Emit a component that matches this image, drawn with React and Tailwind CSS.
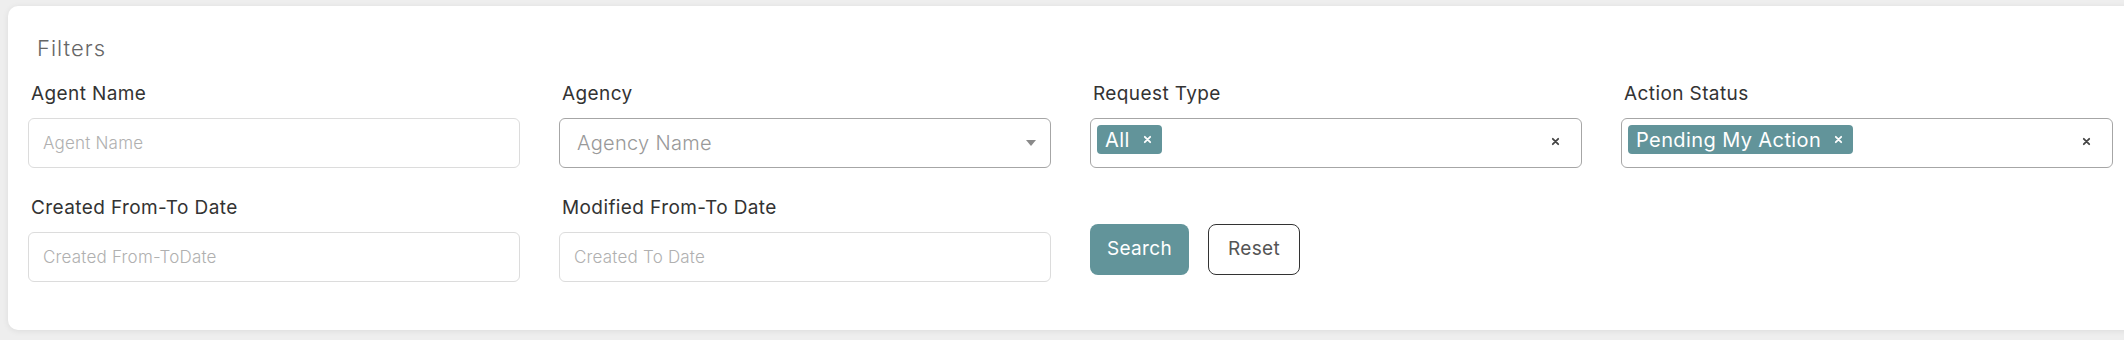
// Small bold "x" used for chips and the clear button
function CrossIcon(props) {
  return (
    <svg width={props.size} height={props.size} viewBox="0 0 10 10" className={props.className}>
      <path d="M2 2L8 8M8 2L2 8" stroke="currentColor" strokeWidth="2" strokeLinecap="round" />
    </svg>
  );
}

function Label(props) {
  return (
    <label className="block pl-[3px] text-[19px] leading-[22px] tracking-[0.4px] text-[#333333] mb-[13px]">
      {props.children}
    </label>
  );
}

function TextInput(props) {
  return (
    <input
      type="text"
      placeholder={props.placeholder}
      className="w-full h-[50px] px-[14px] rounded-[6px] border border-[#dcdcdc] bg-white text-[17px] font-light tracking-[0.2px] text-[#333] placeholder:text-[#b0b0b0] outline-none"
    />
  );
}

function Chip(props) {
  return (
    <span className="flex items-center h-[29px] pl-[8px] pr-[10px] rounded-[4px] bg-[#62949a] text-white text-[20px] tracking-[0.4px] leading-none">
      <span>{props.text}</span>
      <CrossIcon size={9} className="ml-[13px] text-white" />
    </span>
  );
}

function MultiSelect(props) {
  return (
    <div className="w-full h-[50px] flex items-center justify-between pl-[6px] pr-[21px] rounded-[6px] border border-[#a6a6a6] bg-white">
      <div className="flex items-center gap-2 -mt-[7px]">
        <Chip text={props.value} />
      </div>
      <CrossIcon size={9} className="text-[#444] -mt-[4px]" />
    </div>
  );
}

export default function App() {
  return (
    <div className="w-[2124px] h-[340px] overflow-hidden bg-[#eeeeee] pt-[6px] pl-[8px]" style={{ fontFamily: "Inter, 'Noto Sans', sans-serif" }}>
      <div className="w-[2150px] h-[324px] bg-white rounded-[10px] shadow-[0_1px_6px_rgba(0,0,0,0.08)] pl-[20px] pt-[29px]">
        <h2 className="pl-[9px] text-[22px] leading-[26px] tracking-[1px] text-[#666666] font-light mb-[22px]">
          Filters
        </h2>

        <div className="grid grid-cols-[492px_492px_492px_492px] gap-x-[39px]">
          <div>
            <Label>Agent Name</Label>
            <TextInput placeholder="Agent Name" />
          </div>
          <div>
            <Label>Agency</Label>
            <div className="w-full h-[50px] flex items-center justify-between pl-[17px] pr-[14px] rounded-[6px] border border-[#a6a6a6] bg-white">
              <span className="text-[20px] font-light tracking-[0.3px] text-[#999999]">Agency Name</span>
              <svg width="10" height="6" viewBox="0 0 10 6">
                <path d="M0 0H10L5 6Z" fill="#8a8a8a" />
              </svg>
            </div>
          </div>
          <div>
            <Label>Request Type</Label>
            <MultiSelect value="All" />
          </div>
          <div>
            <Label>Action Status</Label>
            <MultiSelect value="Pending My Action" />
          </div>
        </div>

        <div className="grid grid-cols-[492px_492px_492px_492px] gap-x-[39px] mt-[29px]">
          <div>
            <Label>Created From-To Date</Label>
            <TextInput placeholder="Created From-ToDate" />
          </div>
          <div>
            <Label>Modified From-To Date</Label>
            <TextInput placeholder="Created To Date" />
          </div>
          <div className="flex items-start gap-[19px] pt-[27px]">
            <button className="w-[99px] h-[51px] rounded-[8px] bg-[#62949a] text-white text-[19px] tracking-[0.3px]">
              Search
            </button>
            <button className="w-[92px] h-[51px] rounded-[8px] bg-white border border-[#333] text-[#555] text-[19px] tracking-[0.3px]">
              Reset
            </button>
          </div>
          <div></div>
        </div>
      </div>
    </div>
  );
}
